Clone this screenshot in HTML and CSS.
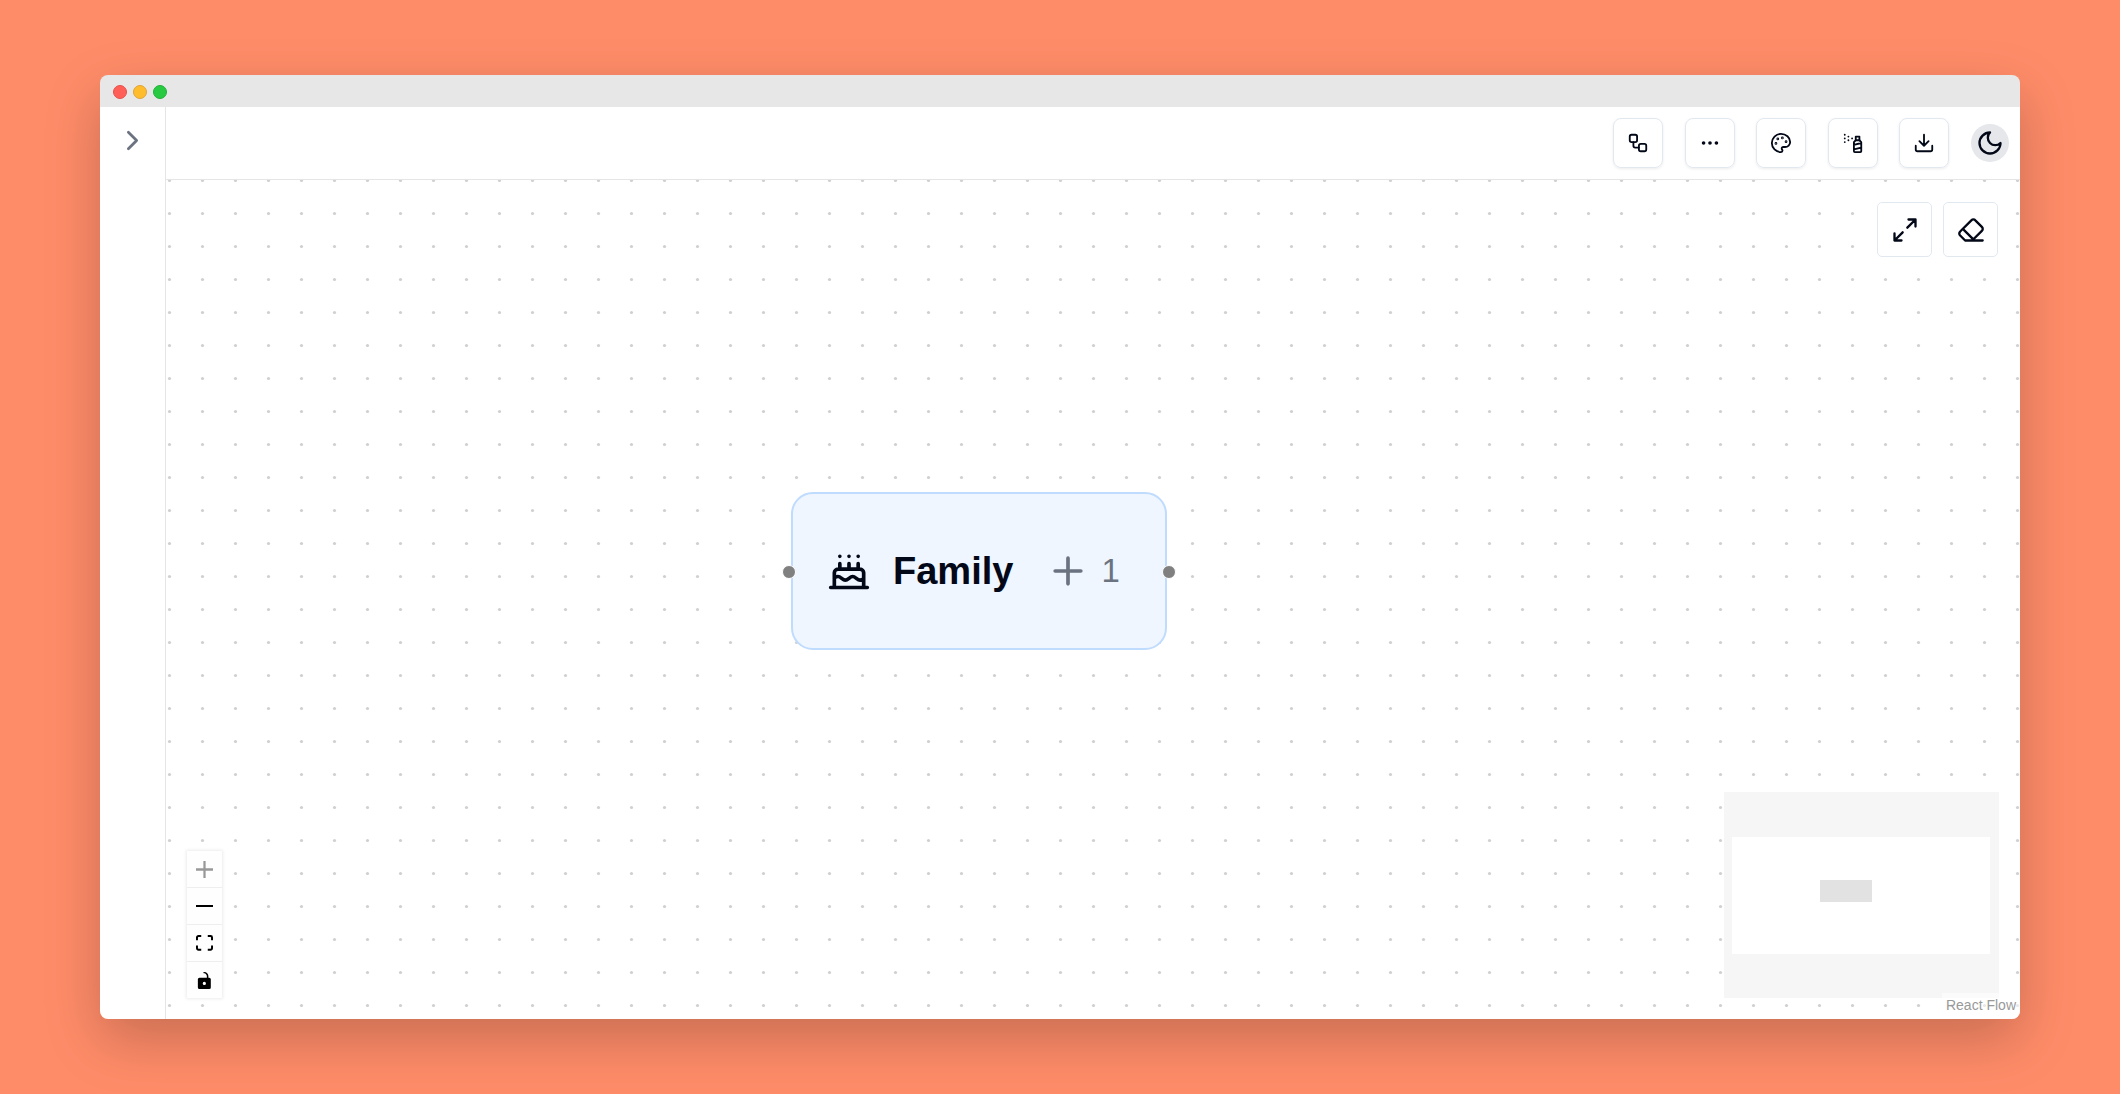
FILE: index.html
```html
<!DOCTYPE html>
<html lang="en">
<head>
<meta charset="utf-8">
<meta name="viewport" content="width=device-width, initial-scale=1">
<title>Family</title>
<link rel="stylesheet" href="styles.css">
</head>
<body>
<div class="window">
  <div class="titlebar">
    <span class="light light-close"></span>
    <span class="light light-minimize"></span>
    <span class="light light-zoom"></span>
  </div>
  <div class="app">
    <aside class="sidebar">
      <button type="button" aria-label="Open sidebar">
        <svg class="icon icon-chevron" viewBox="0 0 24 24"><path d="m9 18 6-6-6-6"/></svg>
      </button>
    </aside>
    <div class="main">
      <header class="header">
        <div class="tools">
          <button class="tool" type="button" aria-label="Layout">
            <svg class="icon icon-small" viewBox="0 0 24 24"><rect width="8" height="8" x="3" y="3" rx="2"/><path d="M7 11v4a2 2 0 0 0 2 2h4"/><rect width="8" height="8" x="13" y="13" rx="2"/></svg>
          </button>
          <button class="tool" type="button" aria-label="Edges">
            <svg class="icon icon-small" viewBox="0 0 24 24"><circle cx="12" cy="12" r="1"/><circle cx="19" cy="12" r="1"/><circle cx="5" cy="12" r="1"/></svg>
          </button>
          <button class="tool" type="button" aria-label="Palette">
            <svg class="icon icon-small" viewBox="0 0 24 24"><circle cx="13.5" cy="6.5" r=".5"/><circle cx="17.5" cy="10.5" r=".5"/><circle cx="8.5" cy="7.5" r=".5"/><circle cx="6.5" cy="12.5" r=".5"/><path d="M12 2C6.5 2 2 6.5 2 12s4.500 10 10 10c.926 0 1.648-.746 1.648-1.688 0-.437-.18-.835-.437-1.125-.29-.289-.438-.652-.438-1.125a1.640 1.640 0 0 1 1.668-1.668h1.996c3.051 0 5.555-2.503 5.555-5.554C21.965 6.012 17.461 2 12 2z"/></svg>
          </button>
          <button class="tool" type="button" aria-label="Spray">
            <svg class="icon icon-small" viewBox="0 0 24 24"><path d="M3 3h.01M7 5h.01M11 7h.01M3 7h.01M7 9h.01M3 11h.01"/><rect width="4" height="4" x="15" y="5"/><path d="m19 9 2 2v10c0 .6-.4 1-1 1h-6c-.6 0-1-.4-1-1V11l2-2M13 14l8-2M13 19l8-2"/></svg>
          </button>
          <button class="tool" type="button" aria-label="Download">
            <svg class="icon icon-small" viewBox="0 0 24 24"><path d="M21 15v4a2 2 0 0 1-2 2H5a2 2 0 0 1-2-2v-4M7 10l5 5 5-5M12 15V3"/></svg>
          </button>
        </div>
        <button class="theme" type="button" aria-label="Dark mode">
          <svg class="icon icon-medium" viewBox="0 0 24 24"><path d="M12 3a6 6 0 0 0 9 9 9 9 0 1 1-9-9Z"/></svg>
        </button>
      </header>
      <main class="canvas">
        <svg class="dots" aria-hidden="true">
          <defs><pattern id="grid" x="-13" y="-16" width="33" height="33" patternUnits="userSpaceOnUse"><circle cx="16.500" cy="16.500" r="1.600"/></pattern></defs>
          <rect width="100%" height="100%" fill="url(#grid)"/>
        </svg>

        <div class="node">
          <span class="handle handle-left"></span>
          <svg class="icon icon-large" viewBox="0 0 24 24"><path d="M20 21v-8a2 2 0 0 0-2-2H6a2 2 0 0 0-2 2v8M4 16s.5-1 2-1 2.500 2 4 2 2.500-2 4-2 2.500 2 4 2 2-1 2-1M2 21h20M7 8v3M12 8v3M17 8v3M7 4h.01M12 4h.01M17 4h.01"/></svg>
          <span class="node-title">Family</span>
          <button class="expand" type="button" aria-label="Expand 1 child">
            <svg class="icon icon-large" viewBox="0 0 24 24"><path d="M5 12h14M12 5v14"/></svg>
            <span>1</span>
          </button>
          <span class="handle handle-right"></span>
        </div>

        <div class="actions">
          <button class="action" type="button" aria-label="Full screen">
            <svg class="icon icon-medium" viewBox="0 0 24 24"><path d="M15 3h6v6M9 21H3v-6M21 3l-7 7M3 21l7-7"/></svg>
          </button>
          <button class="action" type="button" aria-label="Clear">
            <svg class="icon icon-medium" viewBox="0 0 24 24"><path d="m7 21-4.300-4.300c-1-1-1-2.500 0-3.400l9.600-9.600c1-1 2.500-1 3.400 0l5.600 5.600c1 1 1 2.500 0 3.400L13 21M22 21H7M5 11l9 9"/></svg>
          </button>
        </div>

        <div class="controls">
          <button class="control" type="button" aria-label="Zoom in" disabled>
            <svg viewBox="0 0 32 32"><path d="M32 18.133H18.133V32h-4.266V18.133H0v-4.266h13.867V0h4.266v13.867H32z"/></svg>
          </button>
          <button class="control" type="button" aria-label="Zoom out">
            <svg viewBox="0 0 32 5"><path d="M0 0h32v4.200H0z"/></svg>
          </button>
          <button class="control" type="button" aria-label="Fit view">
            <svg viewBox="0 0 32 30"><path d="M3.692 4.630c0-.53.4-.938.939-.938h5.215V0H4.708C2.130 0 0 2.054 0 4.630v5.216h3.692V4.631zM27.354 0h-5.200v3.692h5.170c.53 0 .984.400.984.939v5.215H32V4.631A4.624 4.624 0 0027.354 0zm.954 24.830c0 .532-.4.940-.939.940h-5.215v3.768h5.215c2.577 0 4.631-2.130 4.631-4.707v-5.139h-3.692v5.139zm-23.677.940c-.531 0-.939-.4-.939-.940v-5.138H0v5.139c0 2.577 2.130 4.707 4.708 4.707h5.138V25.770H4.631z"/></svg>
          </button>
          <button class="control" type="button" aria-label="Toggle interactivity">
            <svg viewBox="0 0 25 32"><path d="M21.333 10.667H19.810V7.619C19.810 3.429 16.380 0 12.190 0c-4.114 1.828-1.370 2.133.305 2.438 1.676.305 4.420 2.590 4.420 5.181v3.048H3.047A3.056 3.056 0 000 13.714v15.238A3.056 3.056 0 003.048 32h18.285a3.056 3.056 0 003.048-3.048V13.714a3.056 3.056 0 00-3.048-3.047zM12.190 24.533a3.056 3.056 0 01-3.047-3.047 3.056 3.056 0 013.047-3.048 3.056 3.056 0 013.048 3.048 3.056 3.056 0 01-3.048 3.047z"/></svg>
          </button>
        </div>

        <svg class="minimap" viewBox="0 0 275 206" role="img" aria-label="Mini map">
          <rect class="minimap-view" x="8" y="45" width="258" height="117"/>
          <rect class="minimap-node" x="96" y="88" width="52" height="22"/>
        </svg>
        <a class="attribution" href="https://reactflow.dev">React Flow</a>
      </main>
    </div>
  </div>
</div>
</body>
</html>
```

FILE: styles.css
```css
* {
  box-sizing: border-box;
}

body {
  margin: 0;
  min-height: 100vh;
  padding: 75px 100px;
  display: flex;
  background: #ff8c69;
  color: #020817;
  font-family: Arial, "Liberation Sans", sans-serif;
}

button {
  margin: 0;
  padding: 0;
  border: 0;
  background: none;
  color: inherit;
  font: inherit;
  display: flex;
  align-items: center;
  justify-content: center;
}

.window {
  flex: 1;
  display: flex;
  flex-direction: column;
  border-radius: 8px;
  box-shadow: 0 20px 55px rgba(0, 0, 0, 0.22);
}

.titlebar {
  height: 32px;
  padding: 2px 13px 0;
  display: flex;
  align-items: center;
  gap: 6px;
  background: #e7e7e7;
  border-radius: 8px 8px 0 0;
}

.light {
  width: 14px;
  height: 14px;
  border: 1px solid;
  border-radius: 50%;
}

.light-close {
  background: #ff5f57;
  border-color: #e8504a;
}

.light-minimize {
  background: #ffbd2e;
  border-color: #e0a33a;
}

.light-zoom {
  background: #28ca42;
  border-color: #20b038;
}

.app {
  flex: 1;
  display: flex;
  background: #fff;
  border-radius: 0 0 8px 8px;
  overflow: hidden;
}

.sidebar {
  width: 66px;
  padding-top: 17px;
  display: flex;
  justify-content: center;
  align-items: flex-start;
  border-right: 1px solid #e5e5e5;
  color: #6b7280;
}

.main {
  flex: 1;
  min-width: 0;
  display: flex;
  flex-direction: column;
}

.header {
  height: 73px;
  padding: 0 11px;
  display: flex;
  align-items: center;
  justify-content: flex-end;
  gap: 22px;
  border-bottom: 1px solid #e5e5e5;
}

.tools {
  width: 336px;
  display: flex;
  justify-content: space-between;
}

.tool {
  width: 50px;
  height: 50px;
  border: 1px solid #e2e8f0;
  border-radius: 8px;
  box-shadow: 0 1px 3px rgba(0, 0, 0, 0.08);
}

.theme {
  width: 38px;
  height: 38px;
  border-radius: 50%;
  background: #e5e7eb;
}

.icon {
  display: block;
  flex: none;
  fill: none;
  stroke: currentColor;
  stroke-width: 2;
  stroke-linecap: round;
  stroke-linejoin: round;
}

.icon-small {
  width: 22px;
  height: 22px;
}

.icon-medium {
  width: 28px;
  height: 28px;
}

.icon-chevron {
  width: 33px;
  height: 33px;
}

.icon-large {
  width: 44px;
  height: 44px;
}

.canvas {
  flex: 1;
  position: relative;
}

.dots {
  position: absolute;
  inset: 0;
  width: 100%;
  height: 100%;
}

.dots circle {
  fill: #d0d0d0;
}

.node {
  position: absolute;
  left: 625px;
  top: 312px;
  width: 376px;
  height: 158px;
  padding-left: 34px;
  display: flex;
  align-items: center;
  background: #eff6ff;
  border: 2px solid #bfdbfe;
  border-radius: 22px;
}

.node-title {
  margin: 0 33px 0 22px;
  font-size: 38px;
  font-weight: 700;
  line-height: 44px;
}

.expand {
  gap: 11px;
  color: #6b7280;
  font-size: 33px;
  line-height: 44px;
}

.handle {
  position: absolute;
  top: 50%;
  width: 14px;
  height: 14px;
  margin-top: -6px;
  border: 1px solid #fff;
  border-radius: 50%;
  background: #808080;
}

.handle-left {
  left: -11px;
}

.handle-right {
  right: -11px;
}

.actions {
  position: absolute;
  top: 22px;
  right: 22px;
  display: flex;
  gap: 11px;
}

.action {
  width: 55px;
  height: 55px;
  background: #fff;
  border: 1px solid #e2e8f0;
  border-radius: 5px;
}

.controls {
  position: absolute;
  left: 21px;
  bottom: 21px;
  display: flex;
  flex-direction: column;
  gap: 1px;
  background: #eee;
  box-shadow: 0 0 3px 1px rgba(0, 0, 0, 0.08);
}

.control {
  width: 35px;
  height: 36px;
  background: #fefefe;
}

.control svg {
  width: 17px;
  max-height: 17px;
}

.control:disabled svg {
  fill-opacity: 0.4;
}

.minimap {
  position: absolute;
  right: 21px;
  bottom: 21px;
  width: 275px;
  height: 206px;
  background: #f6f6f6;
}

.minimap-view {
  fill: #fff;
}

.minimap-node {
  fill: #e2e2e2;
}

.attribution {
  position: absolute;
  right: 0;
  bottom: 0;
  padding: 4px 4px 6px;
  background: rgba(255, 255, 255, 0.5);
  color: #999;
  font-size: 14px;
  line-height: 16px;
  text-decoration: none;
}
```
